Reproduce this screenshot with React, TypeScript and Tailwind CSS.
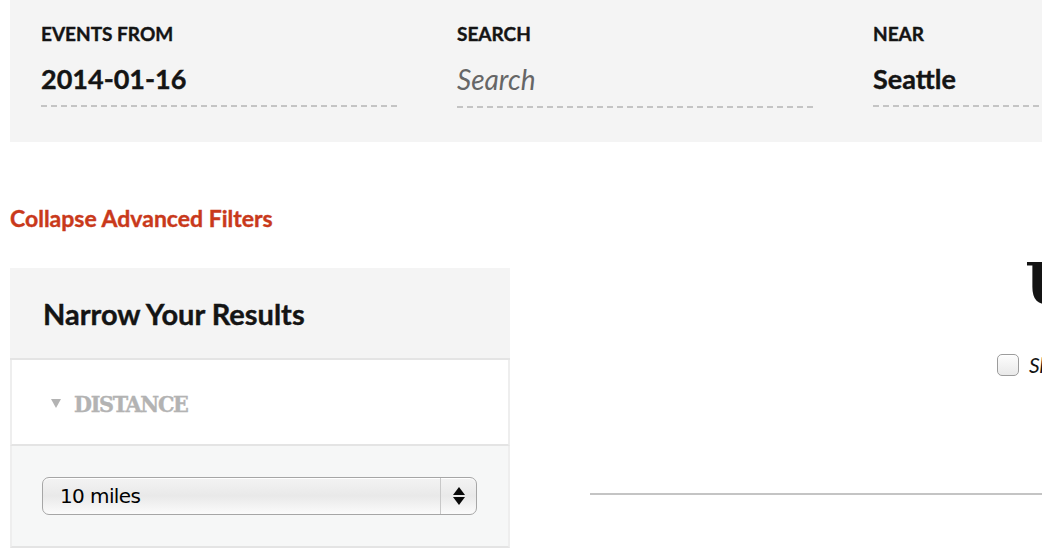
import React from "react";

const sans = "font-['Lato','Open_Sans',sans-serif]";
const slab = "font-['DejaVu_Serif','Liberation_Serif',serif]";
const heavy = "font-bold [-webkit-text-stroke:0.4px_currentColor]";

type FieldProps = {
  label: string;
  value: string;
  placeholder?: boolean;
};

const Field = ({ label, value, placeholder }: FieldProps) => (
  <div className="w-[356px] shrink-0 flex flex-col">
    <span className={`text-[19px] ${heavy} leading-none text-[#141414]`}>{label}</span>
    <span
      className={
        placeholder
          ? "mt-[22px] text-[28px] italic leading-none text-[#666666]"
          : `mt-[22px] text-[27px] ${heavy} leading-none text-[#141414]`
      }
    >
      {value}
    </span>
    <div className="mt-[13px] border-b-2 border-dashed border-[#c4c4c4]" />
  </div>
);

const App = () => {
  return (
    <div className={`w-[1042px] h-[552px] overflow-hidden bg-white ${sans}`}>
      {/* SEARCH BAR */}
      <div className="ml-[10px] h-[142px] bg-[#f4f4f4] flex gap-[60px] pl-[31px] pt-[24px]">
        <Field label="EVENTS FROM" value="2014-01-16" />
        <Field label="SEARCH" value="Search" placeholder />
        <Field label="NEAR" value="Seattle" />
      </div>

      {/* FILTER TOGGLE */}
      <a className={`block ml-[10px] mt-[65px] text-[23px] ${heavy} leading-none text-[#c9391b]`}>
        Collapse Advanced Filters
      </a>

      <div className="flex mt-[38px]">
        {/* SIDEBAR */}
        <div className="ml-[10px] w-[500px] shrink-0">
          <div className="h-[92px] bg-[#f4f4f4] flex items-center pl-[33px] border-b-2 border-[#e4e4e4]">
            <h2 className={`text-[29px] ${heavy} text-[#141414] leading-none`}>Narrow Your Results</h2>
          </div>
          <div className="h-[86px] bg-white border-x-2 border-b-2 border-[#eeeeee] border-b-[#e4e4e4] flex items-center pl-[39px] pt-[2px]">
            <svg width="10" height="9" viewBox="0 0 10 9" className="mr-[13px]">
              <path d="M0 0 L10 0 L5 9 Z" fill="#b3b3b3" />
            </svg>
            <span className={`${slab} font-stretch-condensed text-[23px] ${heavy} tracking-[-1.3px] text-[#b3b3b3] leading-none`}>
              DISTANCE
            </span>
          </div>
          <div className="h-[102px] bg-[#f6f7f7] border-x-2 border-b-2 border-[#eeeeee] border-b-[#e4e4e4] pl-[30px] pt-[31px]">
            <div className="w-[435px] h-[38px] rounded-[7px] border border-[#a6a6a6] bg-gradient-to-b from-[#f3f3f3] via-[#e9e9e9] to-[#fbfbfb] shadow-[inset_0_1px_0_#ffffff] flex items-stretch">
              <span className="flex-1 flex items-center pl-[17px] text-[20px] text-black font-['DejaVu_Sans','Liberation_Sans',sans-serif] tracking-[-0.6px]">
                10 miles
              </span>
              <span className="w-[36px] border-l border-[#c8c8c8] flex items-center justify-center">
                <svg width="14" height="22" viewBox="0 0 14 22">
                  <path d="M7 2 L13 10 L1 10 Z" fill="#0a0a0a" />
                  <path d="M7 20 L13 12 L1 12 Z" fill="#0a0a0a" />
                </svg>
              </span>
            </div>
          </div>
        </div>

        {/* RESULTS */}
        <div className="flex-1 min-w-0 pl-[80px] flex flex-col">
          <h1 className={`${slab} whitespace-nowrap pl-[435px] -mt-[13px] text-[58px] font-bold leading-none text-[#141414]`}>
            Upcoming Events
          </h1>
          <label className="flex items-center whitespace-nowrap pl-[407px] mt-[36px]">
            <span className="w-[22px] h-[22px] rounded-[5px] border border-[#9c9c9c] bg-gradient-to-b from-[#fdfdfd] to-[#e9e9e9] shadow-[inset_0_1px_1px_#ffffff] shrink-0" />
            <span className="ml-[10px] text-[21px] italic text-[#141414]">Show only free events</span>
          </label>
          <div className="mt-[112px] h-[2px] bg-[#c4c4c4] w-[600px]" />
        </div>
      </div>
    </div>
  );
};

export default App;
